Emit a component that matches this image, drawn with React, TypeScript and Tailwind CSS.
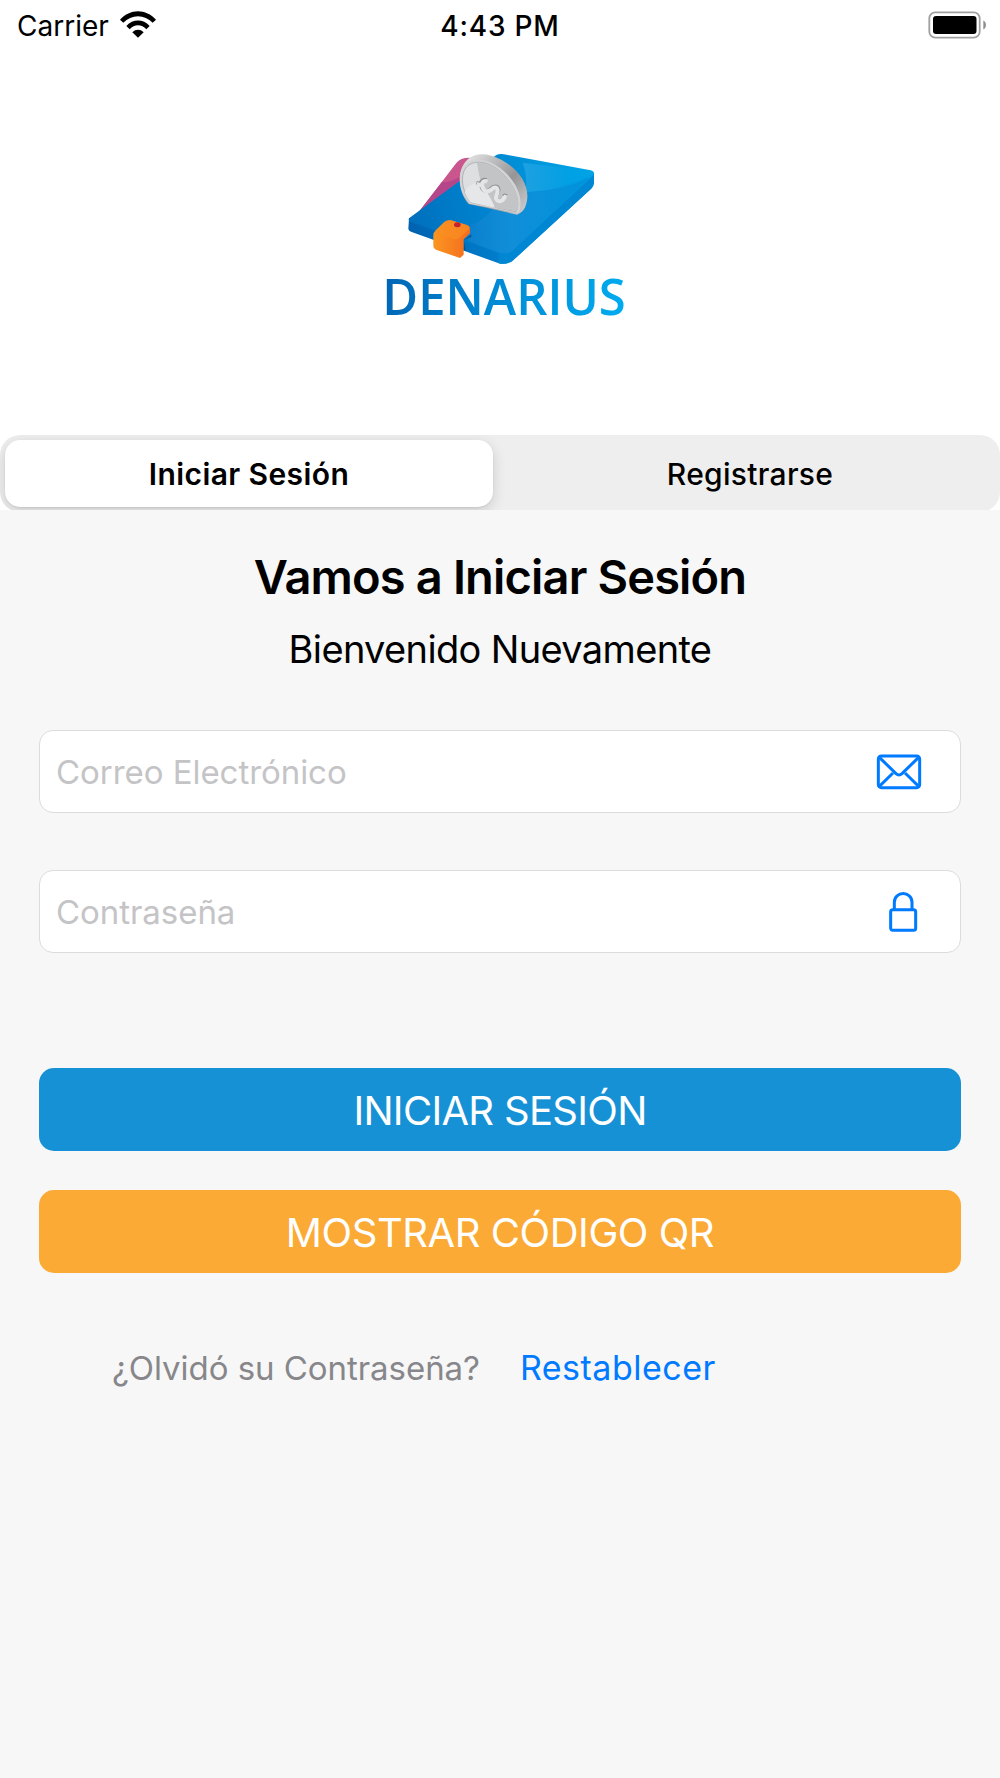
import { useState } from 'react';

function WifiIcon() {
  return (
    <svg width="38" height="30" viewBox="0 0 114 90" className="ml-[10px]">
      <path d="M3 26 C33 -8 81 -8 111 26 L101 35 C77 9 37 9 13 35 Z" />
      <path d="M22 45 C42 23 72 23 92 45 L82 55 C68 39 46 39 32 55 Z" />
      <path d="M40 64 C50 54 64 54 74 64 L57 80 Z" />
    </svg>
  );
}

function BatteryIcon() {
  return (
    <svg width="60" height="32" viewBox="0 0 60 32">
      <rect x="2.3" y="2.3" width="50.4" height="25.4" rx="6" fill="none" stroke="#a0a0a0" strokeWidth="1.8" />
      <rect x="6" y="6" width="43.5" height="18" rx="3" fill="#000" />
      <path d="M56.3 10.5 C59.8 12 59.8 18 56.3 19.5 Z" fill="#8e8e8e" />
    </svg>
  );
}

function MailIcon() {
  return (
    <svg width="46" height="36" viewBox="0 0 138 108" fill="none" stroke="#007aff" strokeWidth="9">
      <rect x="7" y="6" width="124" height="95" rx="9" />
      <path d="M10 10 L60 59 Q69 67 78 59 L128 10" />
      <path d="M10 97 L51 57 M128 97 L87 57" />
    </svg>
  );
}

function LockIcon() {
  return (
    <svg width="30" height="42" viewBox="0 0 90 126" fill="none" stroke="#007aff" strokeWidth="9">
      <rect x="8" y="56" width="75" height="62" rx="6" />
      <path d="M19 55 V34 C19 -1 72 -1 72 34 V55" />
    </svg>
  );
}

function Logo() {
  return (
    <svg width="270" height="190" viewBox="0 0 810 570">
      <defs>
        <linearGradient id="top" x1="115" y1="240" x2="672" y2="100" gradientUnits="userSpaceOnUse">
          <stop offset="0" stopColor="#006fbd" />
          <stop offset="0.5" stopColor="#0088d3" />
          <stop offset="1" stopColor="#00a7e7" />
        </linearGradient>
        <linearGradient id="side" x1="115" y1="280" x2="672" y2="110" gradientUnits="userSpaceOnUse">
          <stop offset="0" stopColor="#0061b0" />
          <stop offset="0.55" stopColor="#0087d4" />
          <stop offset="1" stopColor="#0095dc" />
        </linearGradient>
        <linearGradient id="sheen" x1="200" y1="0" x2="640" y2="0" gradientUnits="userSpaceOnUse">
          <stop offset="0" stopColor="#0876c6" />
          <stop offset="0.5" stopColor="#148fd9" />
          <stop offset="1" stopColor="#0090da" />
        </linearGradient>
        <linearGradient id="shine" x1="455" y1="100" x2="600" y2="100" gradientUnits="userSpaceOnUse">
          <stop offset="0" stopColor="#29a5e3" />
          <stop offset="1" stopColor="#00a1e5" />
        </linearGradient>
        <linearGradient id="clasp" x1="190" y1="0" x2="300" y2="0" gradientUnits="userSpaceOnUse">
          <stop offset="0" stopColor="#fb961f" />
          <stop offset="1" stopColor="#f46b20" />
        </linearGradient>
        <linearGradient id="rim" x1="300" y1="50" x2="470" y2="200" gradientUnits="userSpaceOnUse">
          <stop offset="0" stopColor="#dedede" />
          <stop offset="0.35" stopColor="#b4b4b5" />
          <stop offset="0.6" stopColor="#959597" />
          <stop offset="1" stopColor="#c8c8ca" />
        </linearGradient>
        <linearGradient id="word" x1="48" y1="416" x2="762" y2="525" gradientUnits="userSpaceOnUse">
          <stop offset="0" stopColor="#0066b5" />
          <stop offset="0.45" stopColor="#0089d4" />
          <stop offset="1" stopColor="#00abef" />
        </linearGradient>
      </defs>
      {/* wallet lining */}
      <path d="M144 219 L259 69 Q273 51 307 54 L286 82 L270 123 Z" fill="#ca568e" />
      <path d="M144 219 L215 127 Q240 128 268 112 L270 124 Z" fill="#b5468a" />
      {/* wallet body */}
      <path d="M117 235 L115 267 Q117 274 125 276 L384 369 Q405 376 426 364 L665 145 Q672 138 672 129 L672 98 Z" fill="url(#side)" />
      <path d="M117 235 L270 122 L376 47 Q384 39 402 43 L662 91 Q678 95 667 107 L431 330 Q416 347 388 339 L121 245 Q114 241 117 235 Z" fill="url(#top)" />
      <path d="M284 267 C352 236 372 205 374 194 L442 222 L466 160 C535 151 610 124 660 112 L431 330 Q416 347 388 339 L294 303 L300 272 Z" fill="url(#sheen)" opacity="0.85" />
      <path d="M458 68 L662 92 Q676 96 666 106 C625 133 551 153 467 156 C472 120 466 90 458 68 Z" fill="url(#shine)" opacity="0.75" />
      <path d="M384 369 Q405 376 426 364 L665 145 L672 128 L672 104 L431 330 Q416 347 388 339 Z" fill="#0087d3" />
      {/* coin */}
      <path d="M296 192 C260 151 260 82 298 54 C320 36 359 40 394 59 C453 91 484 147 468 194 Q463 214 441 224 Z" fill="url(#rim)" />
      <path d="M298 191 C269 158 262 107 279 80 C301 49 355 52 402 94 C444 132 463 185 445 220 Z" fill="#d3d4d6" />
      <path d="M301 187 C277 155 269 108 287 84 C309 57 354 61 395 98 C434 134 453 184 438 215 Z" fill="#dedfe1" stroke="#b0b1b4" strokeWidth="3" />
      <path d="M320 68 C356 64 397 92 423 130 C446 163 450 196 438 213 L374 203 C365 170 331 135 326 98 Q324 80 320 68 Z" fill="#c3c4c6" />
      <path d="M301 187 L374 203 C366 178 347 156 333 126 C303 128 288 147 284 155 Q291 174 301 187 Z" fill="#e6e7e8" />
      <path d="M350 120 C336 116 330 126 333 137 C337 154 351 157 361 147 C370 137 384 135 386 149 C387 162 371 171 379 179 C388 187 402 180 403 164 M319 128 L332 132 M400 165 L411 169" fill="none" stroke="#8f9195" strokeWidth="11" />
      <path d="M352 125 C341 119 334 128 337 140 C341 154 353 158 364 149 C371 140 381 140 383 151 C384 163 372 173 380 180 C389 188 402 181 403 168 M320 132 L333 136 M400 169 L410 173" fill="none" stroke="#e4e5e7" strokeWidth="12" />
      {/* clasp */}
      <path d="M281 300 L304 291 L304 283 L294 292 L281 299 L281 330 L288 333 Z" fill="#075693" />
      <path d="M190 286 Q190 278 197 271 L223 246 Q231 239 242 241 L291 255 Q300 258 300 268 L300 280 L281 298 L281 344 L270 354 L200 330 Q190 326 190 317 Z" fill="url(#clasp)" />
      <path d="M194 277 L223 246 Q231 239 242 241 L291 255 Q299 258 298 266 L270 292 Q263 300 250 297 Z" fill="#fa8e22" opacity="0.7" />
      <ellipse cx="262" cy="254" rx="10" ry="7.5" fill="#c6222d" />
      <text
        x="37"
        y="525"
        fill="url(#word)"
        fontSize="153"
        fontWeight="600"
        fontFamily="Open Sans, sans-serif"
        textLength="730"
        lengthAdjust="spacingAndGlyphs"
      >
        DENARIUS
      </text>
    </svg>
  );
}

export default function App() {
  const [email, setEmail] = useState('');
  const [password, setPassword] = useState('');

  return (
    <div className="flex h-[1778px] w-[1000px] flex-col overflow-hidden bg-white font-['Inter',sans-serif] text-black">
      <header className="grid h-[50px] grid-cols-3 items-center pt-[2px]">
        <div className="flex items-center pl-[17px]">
          <span className="text-[28px] leading-[48px]">Carrier</span>
          <WifiIcon />
        </div>
        <span className="text-center text-[28px] leading-[48px] font-medium tracking-[0.8px]">4:43 PM</span>
        <div className="flex justify-end pr-[13px]">
          <BatteryIcon />
        </div>
      </header>

      <div className="mt-[90px] flex justify-center">
        <div className="w-[260px]">
          <Logo />
        </div>
      </div>

      <div className="mt-[105px] h-[75px] shrink-0 overflow-hidden">
        <div className="flex h-[77px] overflow-hidden rounded-[20px] bg-[#eeeeee] p-[5px]">
          <button className="h-[67px] w-[488px] rounded-[15px] bg-white pt-px text-[30px] font-semibold tracking-[0.4px] shadow-[0_4px_14px_rgba(0,0,0,0.14),0_1px_2px_rgba(0,0,0,0.08)]">
            Iniciar Sesión
          </button>
          <button className="h-[67px] flex-1 pt-px pl-[12px] text-[30px] font-medium tracking-[0.3px]">
            Registrarse
          </button>
        </div>
      </div>

      <main className="flex-1 bg-[#f7f7f7] px-[39px] pt-[37px]">
        <h1 className="text-center text-[47px] leading-[60px] font-semibold tracking-[-0.84px]">
          Vamos a Iniciar Sesión
        </h1>
        <p className="mt-[18px] text-center text-[38px] leading-[48px] tracking-[-0.65px]">Bienvenido Nuevamente</p>

        <div className="mt-[57px] flex h-[83px] items-center rounded-[14px] border border-[#dcdcdc] bg-white pr-[38px] pl-[16px]">
          <input
            type="email"
            value={email}
            onChange={(e) => setEmail(e.target.value)}
            placeholder="Correo Electrónico"
            className="min-w-0 flex-1 pt-[2px] text-[33px] tracking-[-0.05px] outline-none placeholder:text-[#c4c4c6]"
          />
          <MailIcon />
        </div>

        <div className="mt-[57px] flex h-[83px] items-center rounded-[14px] border border-[#dcdcdc] bg-white pr-[42px] pl-[16px]">
          <input
            type="password"
            value={password}
            onChange={(e) => setPassword(e.target.value)}
            placeholder="Contraseña"
            className="min-w-0 flex-1 pt-[2px] text-[33px] tracking-[-0.05px] outline-none placeholder:text-[#c4c4c6]"
          />
          <LockIcon />
        </div>

        <button className="mt-[115px] block h-[83px] w-full rounded-[15px] bg-[#1791d5] pt-[2px] text-[40px] font-normal tracking-[-0.7px] text-white">
          INICIAR SESIÓN
        </button>
        <button className="mt-[39px] block h-[83px] w-full rounded-[15px] bg-[#fbaa35] pt-[2px] text-[40px] font-normal tracking-[-0.45px] text-white">
          MOSTRAR CÓDIGO QR
        </button>

        <div className="mt-[70px] flex items-center pl-[73px] leading-[48px]">
          <span className="text-[33px] tracking-[-0.05px] text-[#87878b]">¿Olvidó su Contraseña?</span>
          <a href="#" className="ml-[40px] pt-px text-[34px] tracking-[0.5px] text-[#007aff]">
            Restablecer
          </a>
        </div>
      </main>
    </div>
  );
}
